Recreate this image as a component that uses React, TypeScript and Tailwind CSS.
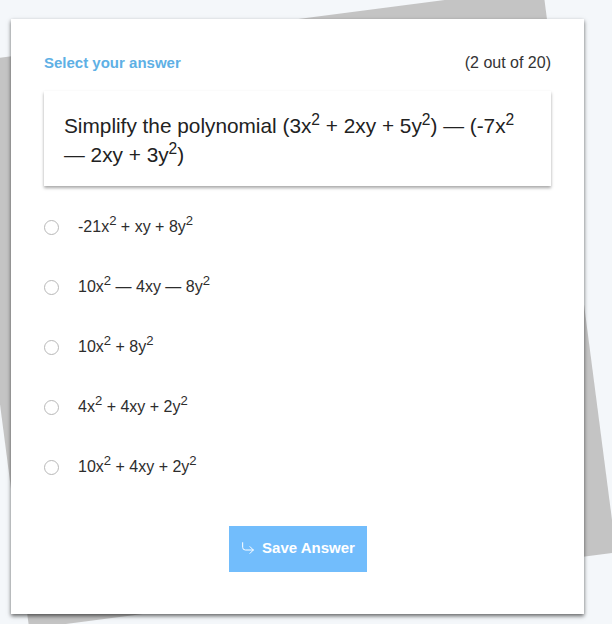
import React, { useState } from "react";
import { CornerDownRight } from "lucide-react";

type Option = {
  id: number;
  parts: (string | { sup: string })[];
};

const options: Option[] = [
  { id: 1, parts: ["-21x", { sup: "2" }, " + xy + 8y", { sup: "2" }] },
  { id: 2, parts: ["10x", { sup: "2" }, " \u2014 4xy \u2014 8y", { sup: "2" }] },
  { id: 3, parts: ["10x", { sup: "2" }, " + 8y", { sup: "2" }] },
  { id: 4, parts: ["4x", { sup: "2" }, " + 4xy + 2y", { sup: "2" }] },
  { id: 5, parts: ["10x", { sup: "2" }, " + 4xy + 2y", { sup: "2" }] },
];

const renderParts = (parts: Option["parts"]) =>
  parts.map((p, i) =>
    typeof p === "string" ? (
      <span key={i}>{p}</span>
    ) : (
      <sup key={i} className="top-[-0.55em] text-[0.82em]">
        {p.sup}
      </sup>
    )
  );

const App = () => {
  const [selected, setSelected] = useState<number | null>(null);

  return (
    <div className="h-[624px] w-full overflow-hidden bg-[#f4f7fa] pt-[19px] pl-[11px] font-['Liberation_Sans',Arial,sans-serif]">
      <div className="relative w-[573px]">
        {/* tilted sheet behind the card */}
        <div className="absolute left-[-21px] top-[4px] h-[570px] w-[592px] rotate-[-7.4deg] bg-[#c4c4c4]" />

        <div className="relative h-[595px] bg-white px-[33px] pt-[34px] shadow-[0_2px_4px_rgba(0,0,0,0.6)]">
          <div className="flex h-5 items-center justify-between">
            <span className="text-[15px] font-bold text-[#5eb0e5]">
              Select your answer
            </span>
            <span className="text-[16px] text-[#333]">(2 out of 20)</span>
          </div>

          <div className="mt-[18px] bg-white px-5 pt-5 pb-[17px] text-[20.8px] leading-[29px] text-[#222] shadow-[0_2px_3px_rgba(0,0,0,0.35)]">
            Simplify the polynomial (3x<sup>2</sup> + 2xy + 5y<sup>2</sup>) {"\u2014"} (-7x
            <sup>2</sup> {"\u2014"} 2xy + 3y<sup>2</sup>)
          </div>

          <div className="mt-[11px]">
            {options.map((o) => (
              <label
                key={o.id}
                onClick={() => setSelected(o.id)}
                className="flex h-[60px] cursor-pointer items-center"
              >
                <span
                  className={
                    selected === o.id
                      ? "h-[15px] w-[15px] rounded-full border-[4px] border-[#72bdfc]"
                      : "h-[15px] w-[15px] rounded-full border-[1.5px] border-[#b8b8b8]"
                  }
                />
                <span className="ml-[19px] text-[16px] text-[#2d2d2d]">
                  {renderParts(o.parts)}
                </span>
              </label>
            ))}
          </div>

          <div className="mt-[29px] flex justify-center">
            <button className="flex h-[46px] w-[138px] items-center justify-center bg-[#72bdfc] pb-[2px] text-[15px] font-bold text-white">
              <CornerDownRight size={16} strokeWidth={1.5} className="mr-[6px]" />
              Save Answer
            </button>
          </div>
        </div>
      </div>
    </div>
  );
};

export default App;
